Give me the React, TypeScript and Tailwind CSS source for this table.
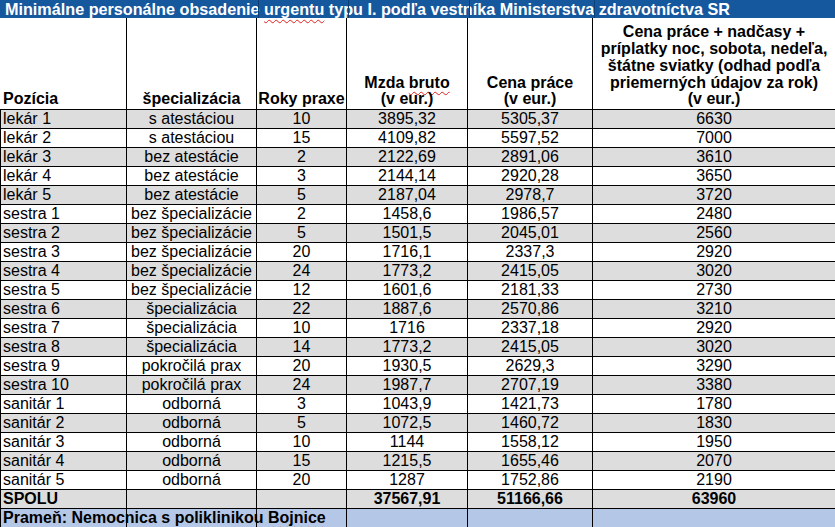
const rows: string[][] = [
  ['lekár 1', 's atestáciou', '10', '3895,32', '5305,37', '6630'],
  ['lekár 2', 's atestáciou', '15', '4109,82', '5597,52', '7000'],
  ['lekár 3', 'bez atestácie', '2', '2122,69', '2891,06', '3610'],
  ['lekár 4', 'bez atestácie', '3', '2144,14', '2920,28', '3650'],
  ['lekár 5', 'bez atestácie', '5', '2187,04', '2978,7', '3720'],
  ['sestra 1', 'bez špecializácie', '2', '1458,6', '1986,57', '2480'],
  ['sestra 2', 'bez špecializácie', '5', '1501,5', '2045,01', '2560'],
  ['sestra 3', 'bez špecializácie', '20', '1716,1', '2337,3', '2920'],
  ['sestra 4', 'bez špecializácie', '24', '1773,2', '2415,05', '3020'],
  ['sestra 5', 'bez špecializácie', '12', '1601,6', '2181,33', '2730'],
  ['sestra 6', 'špecializácia', '22', '1887,6', '2570,86', '3210'],
  ['sestra 7', 'špecializácia', '10', '1716', '2337,18', '2920'],
  ['sestra 8', 'špecializácia', '14', '1773,2', '2415,05', '3020'],
  ['sestra 9', 'pokročilá prax', '20', '1930,5', '2629,3', '3290'],
  ['sestra 10', 'pokročilá prax', '24', '1987,7', '2707,19', '3380'],
  ['sanitár 1', 'odborná', '3', '1043,9', '1421,73', '1780'],
  ['sanitár 2', 'odborná', '5', '1072,5', '1460,72', '1830'],
  ['sanitár 3', 'odborná', '10', '1144', '1558,12', '1950'],
  ['sanitár 4', 'odborná', '15', '1215,5', '1655,46', '2070'],
  ['sanitár 5', 'odborná', '20', '1287', '1752,86', '2190'],
];

// column widths, right border included
const c1 = 'w-[127px] shrink-0 border-l border-r border-black pl-[2px]';
const c2 = 'w-[130px] shrink-0 border-r border-black text-center';
const c3 = 'w-[90px] shrink-0 border-r border-black text-center';
const c4 = 'w-[121px] shrink-0 border-r border-black text-center';
const c5 = 'w-[125px] shrink-0 border-r border-black text-center';
const c6 = 'w-[260px] shrink-0 pr-[18px] text-center';

const spell = 'underline decoration-wavy decoration-[#e0201c] decoration-1 underline-offset-[3px]';

function DataRow({ cells, shaded, bold }: { cells: string[]; shaded: boolean; bold?: boolean }) {
  return (
    <div className={`flex h-[19px] border-b border-black leading-[18px] ${shaded ? 'bg-[#dddddd]' : 'bg-white'} ${bold ? 'font-bold' : ''}`}>
      <div className={c1}>{cells[0]}</div>
      <div className={c2}>{cells[1]}</div>
      <div className={c3}>{cells[2]}</div>
      <div className={c4}>{cells[3]}</div>
      <div className={c5}>{cells[4]}</div>
      <div className={c6}>{cells[5]}</div>
    </div>
  );
}

export default function App() {
  return (
    <div className="w-[835px] h-[527px] overflow-hidden bg-white text-black text-[16px] font-['Liberation_Sans',Arial,sans-serif]">
      {/* Title bar */}
      <div className="flex h-[18px] bg-[#15589e] text-white font-bold text-[16.2px] leading-[18px] whitespace-nowrap">
        <div className="w-[258px] shrink-0 pl-[5px]">
          Minimálne personálne obsadenie <span className="underline decoration-wavy decoration-[#e0201c] decoration-1 underline-offset-[4px]">urgentu</span> typu I. podľa vestníka Ministerstva zdravotníctva SR
        </div>
        <div className="w-[90px] shrink-0 border-l border-[#0c3f75]" />
        <div className="w-[121px] shrink-0 border-l border-[#0c3f75]" />
        <div className="w-[125px] shrink-0 border-l border-[#0c3f75]" />
        <div className="flex-1 border-l border-[#0c3f75]" />
      </div>

      {/* Header */}
      <div className="flex h-[92px] border-b border-black font-bold leading-[16.7px]">
        <div className="w-[127px] shrink-0 border-r border-black pl-[3px] flex flex-col justify-end pb-[1px]">Pozícia</div>
        <div className={`${c2} flex flex-col justify-end pb-[1px]`}>špecializácia</div>
        <div className={`${c3} flex flex-col justify-end pb-[1px] whitespace-nowrap`}>Roky praxe</div>
        <div className={`${c4} flex flex-col justify-end pb-[1px]`}>
          <span>Mzda <span className={spell}>bruto</span></span>
          <span>(v eur.)</span>
        </div>
        <div className={`${c5} flex flex-col justify-end pb-[1px]`}>
          <span>Cena práce</span>
          <span>(v eur.)</span>
        </div>
        <div className={`${c6} flex flex-col justify-end pb-[1px] whitespace-nowrap`}>
          <span>Cena práce + nadčasy +</span>
          <span>príplatky noc, sobota, nedeľa,</span>
          <span>štátne sviatky (odhad podľa</span>
          <span>priemerných údajov za rok)</span>
          <span>(v eur.)</span>
        </div>
      </div>

      {rows.map((r, i) => (
        <DataRow key={r[0]} cells={r} shaded={i % 2 === 0} />
      ))}
      <DataRow cells={['SPOLU', '', '', '37567,91', '51166,66', '63960']} shaded bold />

      {/* Source row */}
      <div className="flex h-[19px] bg-[#b4c7e7] font-bold leading-[18px] whitespace-nowrap">
        <div className={c1}>
          Prameň: Nemocnica s poliklinikou <span className={spell}>Bojnice</span>
        </div>
        <div className={c2} />
        <div className={c3} />
        <div className={c4} />
        <div className={c5} />
        <div className={c6} />
      </div>
    </div>
  );
}
